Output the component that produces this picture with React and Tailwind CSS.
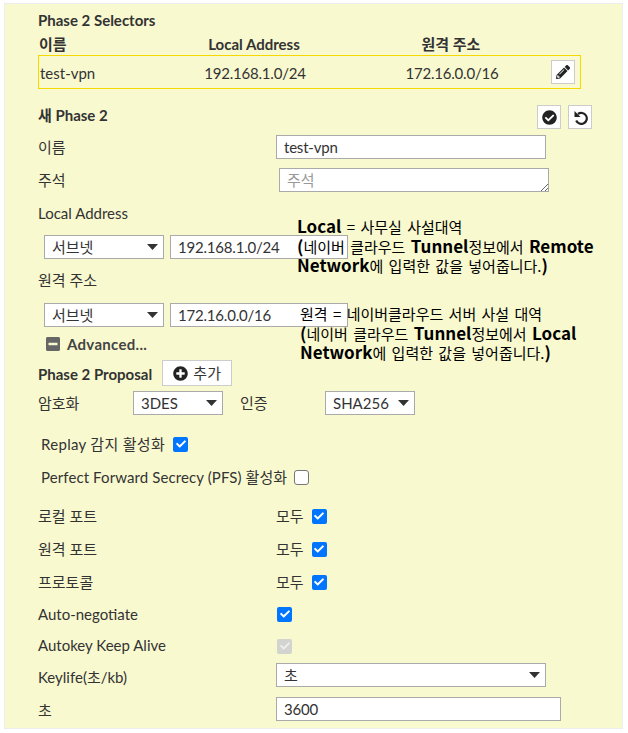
import { FaPencilAlt, FaCheckCircle, FaPlusCircle, FaMinusSquare, FaCheck } from "react-icons/fa";

const FONT = "font-['Lato','Noto_Sans_CJK_KR',sans-serif]";

function Arrow() {
  return (
    <svg width="11" height="6" viewBox="0 0 11 6" className="absolute top-[8px] right-[5px]">
      <path d="M0 0 L11 0 L5.5 6 Z" fill="#333" />
    </svg>
  );
}

function UndoIcon() {
  return (
    <svg width="15" height="15" viewBox="0 0 15 15">
      <path d="M5 4 A5.5 5.5 0 1 1 3.2 10.5" fill="none" stroke="#222" strokeWidth="2.2" />
      <path d="M1.5 1 L1.5 7 L7.5 7 Z" fill="#222" />
    </svg>
  );
}

function SelectBox({ value, className }) {
  return (
    <div className={`relative h-6 shrink-0 border border-[#aaa] bg-white pl-[7px] leading-[22px] text-[#333] ${className}`}>
      {value}
      <Arrow />
    </div>
  );
}

function TextBox({ value, className }) {
  return (
    <input
      readOnly
      value={value}
      className={`h-6 shrink-0 border border-[#aaa] bg-white pl-[7px] tracking-[-0.2px] text-[#333] outline-none ${className}`}
    />
  );
}

function CheckBox({ checked = true, disabled = false, className = "" }) {
  if (disabled) {
    return (
      <span className={`flex h-[15px] w-[15px] shrink-0 items-center justify-center rounded-[2px] bg-[#d3d3d0] text-[#eeeeee] ${className}`}>
        <FaCheck size={10} />
      </span>
    );
  }
  if (!checked) {
    return <span className={`h-[15px] w-[15px] shrink-0 rounded-[3px] border border-[#777] bg-white ${className}`} />;
  }
  return (
    <span className={`flex h-[15px] w-[15px] shrink-0 items-center justify-center rounded-[2px] bg-[#0075ff] text-white ${className}`}>
      <FaCheck size={10} />
    </span>
  );
}

function IconButton({ children, className = "" }) {
  return (
    <button className={`flex h-6 w-6 items-center justify-center border border-[#ccc] bg-white text-[#222] ${className}`}>
      {children}
    </button>
  );
}

function Row({ label, className = "", labelClass = "", children }) {
  return (
    <div className={`flex items-center ${className}`}>
      <span className={`w-[238px] shrink-0 ${labelClass}`}>{label}</span>
      {children}
    </div>
  );
}

export default function App() {
  return (
    <div className={`relative h-[733px] w-[628px] overflow-hidden bg-white pt-[3px] pl-[4px] text-[15px] text-[#333] ${FONT}`}>
      <div className="h-[726px] w-[619px] border border-[#eeeeee] bg-[#f9f9d0] pl-[33px]">
        <div className="mt-[6px] h-5 font-bold leading-5">Phase 2 Selectors</div>

        <div className="mt-[2px] flex h-6 items-center pl-[1px] font-bold">
          <span className="w-[130px]">이름</span>
          <span className="w-[170px] text-center">Local Address</span>
          <span className="ml-[57px] w-[110px] text-center">원격 주소</span>
        </div>

        <div className="mt-[-1px] flex h-[34px] w-[543px] items-center border border-[#f5d800] pl-[1px]">
          <span className="w-[130px] pt-[2px]">test-vpn</span>
          <span className="w-[170px] pt-[2px] text-center tracking-[-0.2px]">192.168.1.0/24</span>
          <span className="ml-[57px] w-[110px] pt-[2px] text-center tracking-[-0.2px]">172.16.0.0/16</span>
          <IconButton className="ml-[44px]"><FaPencilAlt size={14} /></IconButton>
        </div>

        <div className="mt-[16px] flex h-6 items-center font-bold">
          <span className="w-[499px] pb-[3px]">새 Phase 2</span>
          <IconButton><FaCheckCircle size={15} /></IconButton>
          <IconButton className="ml-[7px]"><UndoIcon /></IconButton>
        </div>

        <Row label="이름" className="mt-[6px] h-6">
          <TextBox value="test-vpn" className="w-[270px]" />
        </Row>

        <Row label="주석" className="mt-[9px] h-6">
          <div className="relative ml-[3px] h-6 w-[270px] border border-[#aaa] bg-white pl-[7px] leading-[22px] text-[#999]">
            주석
            <svg width="8" height="8" viewBox="0 0 8 8" className="absolute right-0 bottom-0">
              <path d="M1 8 L8 1 M5 8 L8 5" stroke="#666" strokeWidth="1" />
            </svg>
          </div>
        </Row>

        <div className="mt-[11px] h-5 leading-5">Local Address</div>

        <div className="mt-[12px] flex h-6 items-center pl-[6px]">
          <SelectBox value="서브넷" className="w-[120px]" />
          <TextBox value="192.168.1.0/24" className="ml-[6px] w-[178px]" />
        </div>

        <div className="mt-[11px] h-5 leading-5">원격 주소</div>

        <div className="mt-[13px] flex h-6 items-center pl-[6px]">
          <SelectBox value="서브넷" className="w-[120px]" />
          <TextBox value="172.16.0.0/16" className="ml-[6px] w-[178px]" />
        </div>

        <div className="mt-[7px] flex h-5 items-center pl-[7px] font-bold tracking-[0.3px] text-[#444]">
          <FaMinusSquare size={16} className="text-[#666]" />
          <span className="ml-[6px]">Advanced...</span>
        </div>

        <div className="mt-[6px] flex h-[26px] items-center font-bold">
          <span className="pt-[2px]">Phase 2 Proposal</span>
          <button className="ml-[10px] flex h-[26px] w-[70px] items-center justify-center border border-[#ccc] bg-white font-normal">
            <FaPlusCircle size={15} className="text-[#222]" />
            <span className="ml-[5px]">추가</span>
          </button>
        </div>

        <div className="mt-[5px] flex h-6 items-center">
          <span className="w-[95px] pt-[1px]">암호화</span>
          <SelectBox value="3DES" className="w-[90px]" />
          <span className="ml-[17px] w-[85px] pt-[1px]">인증</span>
          <SelectBox value="SHA256" className="w-[90px]" />
        </div>

        <div className="mt-[19px] flex h-5 items-center pl-[3px]">
          <span className="tracking-[0.3px]">Replay 감지 활성화</span>
          <CheckBox className="ml-[8px]" />
        </div>

        <div className="mt-[13px] flex h-5 items-center pl-[3px]">
          <span className="tracking-[0.1px]">Perfect Forward Secrecy (PFS) 활성화</span>
          <CheckBox checked={false} className="ml-[7px]" />
        </div>

        <Row label="로컬 포트" className="mt-[19px] h-5">
          <span>모두</span>
          <CheckBox className="ml-[8px]" />
        </Row>
        <Row label="원격 포트" className="mt-[13px] h-5">
          <span>모두</span>
          <CheckBox className="ml-[8px]" />
        </Row>
        <Row label="프로토콜" className="mt-[13px] h-5">
          <span>모두</span>
          <CheckBox className="ml-[8px]" />
        </Row>
        <Row label="Auto-negotiate" className="mt-[12px] h-5">
          <CheckBox className="ml-[1px]" />
        </Row>
        <Row label="Autokey Keep Alive" labelClass="pb-[2px]" className="mt-[12px] h-5">
          <CheckBox disabled className="ml-[1px]" />
        </Row>
        <Row label="Keylife(초/kb)" labelClass="pt-[4px]" className="mt-[7px] h-6">
          <SelectBox value="초" className="w-[270px]" />
        </Row>
        <Row label="초" labelClass="pt-[2px]" className="mt-[10px] h-6">
          <TextBox value="3600" className="w-[285px]" />
        </Row>
      </div>

      {/* 위에 덧붙인 메모 */}
      <div className="absolute top-[217px] left-[297px] w-[310px] font-['Noto_Sans_CJK_KR',sans-serif] text-[15px] leading-[18.6px] text-black [word-spacing:2px]">
        <b className="text-[17px]">Local</b> = 사무실 사설대역<br />
        <b className="text-[17px]">(</b>네이버 클라우드 <b className="text-[17px]">Tunnel</b>정보에서 <b className="text-[17px]">Remote Network</b>에 입력한 값을 넣어줍니다.<b className="text-[17px]">)</b>
      </div>
      <div className="absolute top-[305px] left-[300px] w-[290px] font-['Noto_Sans_CJK_KR',sans-serif] text-[15px] leading-[18.6px] text-black [word-spacing:2px]">
        원격 = 네이버클라우드 서버 사설 대역<br />
        <b className="text-[17px]">(</b>네이버 클라우드 <b className="text-[17px]">Tunnel</b>정보에서 <b className="text-[17px]">Local Network</b>에 입력한 값을 넣어줍니다.<b className="text-[17px]">)</b>
      </div>
    </div>
  );
}
